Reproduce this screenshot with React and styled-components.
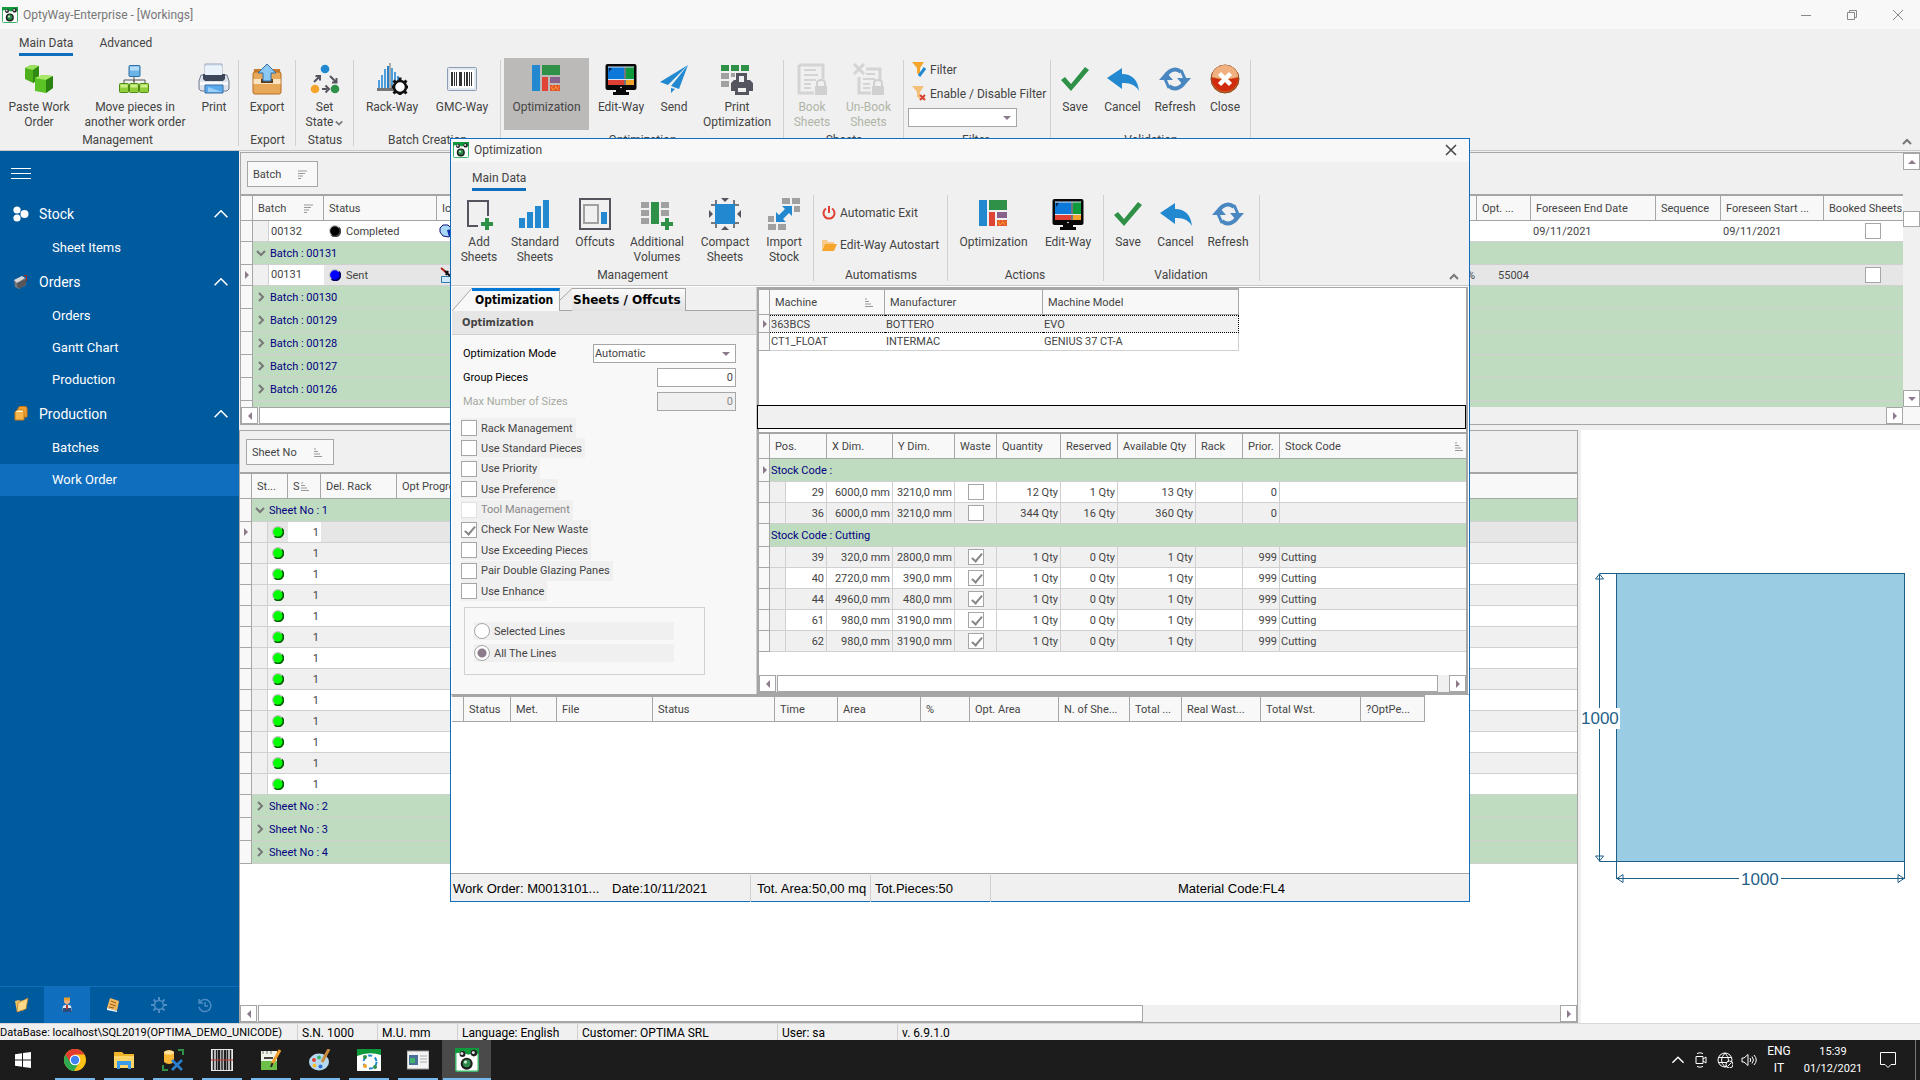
// src/App.jsx

import React, {useState} from "react"
import styled, {createGlobalStyle, css} from "styled-components"

const GlobalStyle = createGlobalStyle`
    * {
        box-sizing: border-box;
    }

    body {
        margin: 0;
        font-family: Roboto, "Liberation Sans", sans-serif;
        font-size: 12px;
        color: #444444;
        background: #f0f0f0;
    }

    button, input, select {
        font: inherit;
        color: inherit;
        margin: 0;
        border-radius: 0;
    }

    svg {
        display: block;
        flex-shrink: 0;
    }
`

const LINE = "#a6a6a6"
const SOFT = "#d0d0d0"

/* ---------- Icons ---------- */

const Svg = ({size = 32, box = "0 0 32 32", children, ...rest}) => (
  <svg width={size} height={size} viewBox={box} fill="none" aria-hidden="true" {...rest}>
    {children}
  </svg>
)

const LogoIcon = ({size = 16}) => (
  <Svg size={size} box="0 0 16 16">
    <rect x="0.5" y="0.5" width="15" height="15" rx="1" fill="#ffffff" stroke="#3fb56b" />
    <path d="M0 0h16v4l-3-1-4 1.500-4-1.500-5 0.500z" fill="#0f9a3c" />
    <circle cx="5" cy="4" r="2" fill="#222222" />
    <circle cx="4.6" cy="3.6" r="1" fill="#dddddd" />
    <circle cx="12.6" cy="3.4" r="2.2" fill="#222222" />
    <circle cx="12.2" cy="3" r="1" fill="#dddddd" />
    <circle cx="7.8" cy="10.5" r="4" fill="#1d1d1d" />
    <circle cx="7.8" cy="10.2" r="2.6" fill="#2d8a4a" />
    <circle cx="7" cy="9.4" r="1" fill="#d8f0d8" />
  </Svg>
)

const CubesIcon = () => (
  <Svg>
    <path d="M2 5l6-3 8 1v13l-6 4-8-4z" fill="#4fae1c" />
    <path d="M2 5l6-3 8 1-6 4z" fill="#9be25a" />
    <path d="M10 7l6-4v13l-6 4z" fill="#2f8a12" />
    <path d="M12 15l7-3 11 1v12l-7 5-11-2z" fill="#5cc326" />
    <path d="M12 15l7-3 11 1-7 4z" fill="#a8ea68" />
    <path d="M23 17l7-4v12l-7 5z" fill="#2a8212" />
  </Svg>
)

const TreeIcon = () => (
  <Svg>
    <path d="M15 13v6M5 21v-4h21v4M15 17v4" stroke="#555555" />
    <rect x="10" y="2.500" width="11" height="11" rx="1" fill="#6bb4e8" stroke="#2d6da3" />
    <rect x="11" y="3.500" width="9" height="4" fill="#b4dcf7" />
    {[0.5, 10.5, 20.5].map((x) => (
      <g key={x}>
        <rect x={x} y="20.5" width="9" height="9" rx="1" fill="#8fce3a" stroke="#4f8a14" />
        <rect x={x + 1} y="21.5" width="7" height="3" fill="#cdf08c" />
      </g>
    ))}
  </Svg>
)

const PrinterIcon = () => (
  <Svg>
    <path d="M7 1h17v12H7z" fill="#dce8f7" stroke="#9aa9bd" />
    <path d="M3 12h3v4h20v-4h3l2 6v8l-2 2H3l-2-2v-8z" fill="#dde2ea" stroke="#6f7d93" />
    <path d="M5 11h22v5l-2 2H7l-2-2z" fill="#3d4658" />
    <path d="M7 3h17v9H7z" fill="#eaf2fc" />
    <path d="M2 19h28v3H2z" fill="#f7f9fc" />
    <path d="M7 22h18v8H7z" fill="#5aa9ec" stroke="#3a6ea5" />
    <path d="M10 24l14 5h-14z" fill="#9bd0fa" />
  </Svg>
)

const ExportIcon = () => (
  <Svg>
    <path d="M3 6h26l1 10H2z" fill="#c97b2e" />
    <rect x="2" y="9" width="28" height="22" rx="2" fill="#e8a85a" stroke="#b56d22" />
    <path d="M2.500 16h27v5h-27z" fill="#f9e3c0" />
    <path d="M10 16h12v4H10z" fill="#5d3917" />
    <path d="M16 1l9 9h-5v8h-8v-8H7z" fill="#8cc8f2" stroke="#2f6ea8" />
  </Svg>
)

const StateIcon = () => (
  <Svg>
    <circle cx="16" cy="6" r="4.300" fill="#2289d0" />
    <circle cx="6" cy="26" r="4.300" fill="#f5a52c" />
    <circle cx="26" cy="26" r="4.300" fill="#2f9048" />
    <path d="M5 19l5-5M6.500 13H11v4.500M21 13l6 6M27.500 15v4.500H23M13 26h5M16.500 22.500L20 26l-3.500 3.500" stroke="#555560" strokeWidth="2" />
  </Svg>
)

const RackIcon = () => (
  <Svg>
    <path d="M1 25h17v3H1z" fill="#777777" />
    <path d="M2 17h2v8H2zM5 12h2v13H5zM8 6h2v19H8z" fill="#4d9fdc" />
    <path d="M11 3h2v22h-2z" fill="#2b7fc7" />
    <path d="M13.500 0h1v27h-1z" fill="#666666" />
    <path d="M15 5h2v18h-2zM18 9h2v9h-2zM21 13h2v6h-2z" fill="#4d9fdc" />
    <circle cx="24" cy="24" r="6" fill="#ffffff" stroke="#111111" strokeWidth="2.500" />
    <path d="M24 14.500v3M24 30.500v2M15.500 24h2.500M30 24h2.500M17.500 17.500l2 2M28.500 28.500l2 2M30.500 17.500l-2 2M17.500 30.500l2-2" stroke="#111111" strokeWidth="3" />
  </Svg>
)

const BarcodeIcon = () => (
  <Svg>
    <rect x="1.500" y="4.500" width="29" height="23" rx="1" fill="#f4f7fb" stroke="#8d9db3" />
    <rect x="3" y="6" width="26" height="20" fill="#ffffff" stroke="#cfd8e4" />
    {[5, 8, 10, 13, 15, 18, 20, 23, 25].map((x, i) => (
      <rect key={x} x={x} y="9" width={i % 3 ? 1 : 2} height="14" fill="#333333" />
    ))}
  </Svg>
)

const LayoutIcon = () => (
  <Svg>
    <path d="M1 2h8v26H1z" fill="#2289d0" />
    <path d="M11 2h18v10H11z" fill="#2f9048" />
    <path d="M11 14h6v14h-6z" fill="#e04434" />
    <path d="M19 14h10v6H19z" fill="#88628c" />
    <path d="M19 22h10v6H19z" fill="#e4572e" />
    <path d="M20 24l2 3 3-3 2 3M21 23h1M24 23h1M27 24h1" stroke="#f5a52c" />
  </Svg>
)

const MonitorIcon = () => (
  <Svg>
    <rect x="0.500" y="1" width="31" height="26" rx="2" fill="#080808" />
    <path d="M3 4h16v12H3z" fill="#0c79da" />
    <path d="M21 4h8v12h-8z" fill="#0f9a3c" />
    <path d="M3 17h16v5H3z" fill="#de4034" />
    <path d="M21 17h8v5h-8z" fill="#f3a32c" />
    <path d="M4 5h3l-3 4z" fill="#06224c" />
    <path d="M3 4h26M20 4v18M3 16.500h26" stroke="#d6e6f5" />
    <path d="M11 27h10v2h3v3H8v-3h3z" fill="#080808" />
    <circle cx="16" cy="24.500" r="0.800" fill="#ffffff" />
  </Svg>
)

const SendIcon = () => (
  <Svg>
    <path d="M30 2L2 19l8 3z" fill="#2289d0" />
    <path d="M30 2L13 23l8 3z" fill="#2289d0" />
    <path d="M13 25v5l4-4z" fill="#2289d0" />
  </Svg>
)

const PrintLayoutIcon = () => (
  <Svg>
    <path d="M0 2h8v6H0zM10 2h8v6h-8zM20 2h8v6h-8z" fill="#2f9048" />
    <path d="M0 10h8v6H0zM10 10h4v4h-4zM0 18h8v6H0z" fill="#a0a0a0" />
    <path d="M15 10h11v7h3l3 3v8h-4v4H14v-4h-4v-8l3-3h2z" fill="#555560" />
    <path d="M18 13h5v6h-5zM17 25h8v4h-8z" fill="#f0f0f0" />
  </Svg>
)

const BookIcon = ({removed}) => (
  <Svg>
    <path d={removed ? "M13 6h14v12M6 14v16h12" : "M3 2h24v14M3 2v28h15"} stroke="#d4d4d4" strokeWidth="3" />
    {removed && <path d="M1 1l10 10M11 1L1 11" stroke="#d4d4d4" strokeWidth="3" />}
    <path d={removed ? "M13 11h9M10 16h12M10 21h7M10 25h7" : "M8 7h12M8 12h14M8 17h12M8 21h7M8 25h7"} stroke="#d4d4d4" strokeWidth="2" />
    <path d="M19 23h12v9H19z" fill="#d0d0d0" />
    <path d="M21 23v-3q0-3 4-3t4 3v3" stroke="#d0d0d0" strokeWidth="2" />
  </Svg>
)

const CheckIcon = () => (
  <Svg>
    <path d="M2 17l4-3 6 7L26 4l4 3-18 21z" fill="#2f9048" />
  </Svg>
)

const UndoIcon = () => (
  <Svg>
    <path d="M0 15L15 5v6q15 0 17 17-5-9-17-8v6z" fill="#2289d0" />
  </Svg>
)

const RefreshIcon = () => (
  <Svg>
    <path d="M7 17a9 9 0 0 1 15-8M25 15a9 9 0 0 1-15 8" stroke="#4a87c0" strokeWidth="4" />
    <path d="M0 17l7-8 7 8zM18 15l7 8 7-8z" fill="#4a87c0" />
    <path d="M22 7l4 9M10 25l-4-9" stroke="#4a87c0" strokeWidth="3" />
  </Svg>
)

const CloseRoundIcon = () => (
  <Svg>
    <circle cx="16" cy="16" r="14" fill="#c9541c" stroke="#8a4a20" />
    <path d="M3 14a13 12 0 0 1 26 0q-13 4-26 0z" fill="#f0b080" />
    <path d="M3 15q13 3 26 0a13 13 0 0 1-26 0z" fill="#cf2b0c" />
    <path d="M10.500 10.500l11 11M21.500 10.500l-11 11" stroke="#ffffff" strokeWidth="4.500" />
  </Svg>
)

const FunnelIcon = ({off}) => (
  <Svg size={16} box="0 0 16 16">
    <path d="M1 0h12L9 6v7l-3-2V6z" fill={off ? "#f4c078" : "#f5a52c"} />
    {off
      ? <path d="M9 9l5 5M14 9l-5 5" stroke="#d8402f" strokeWidth="2" />
      : <path d="M14 6l-6 8" stroke="#2289d0" strokeWidth="3" />}
  </Svg>
)

const AddSheetIcon = () => (
  <Svg>
    <path d="M15 28H5V3h20v15" stroke="#555560" strokeWidth="2" />
    <path d="M24 20v12M18 26h12" stroke="#2f9048" strokeWidth="4" />
  </Svg>
)

const BarsIcon = () => (
  <Svg>
    <path d="M0 20h6v10H0zM8 14h6v16H8zM16 8h6v22h-6zM24 2h6v28h-6z" fill="#2289d0" />
  </Svg>
)

const OffcutsIcon = () => (
  <Svg>
    <path d="M1 1h30v30H1z" stroke="#555560" strokeWidth="2" />
    <path d="M5 7h14v18H5z" stroke="#a0a0a0" strokeWidth="2" />
    <path d="M22 14h6v12h-6z" fill="#2289d0" />
  </Svg>
)

const VolumesIcon = () => (
  <Svg>
    <path d="M0 4h8v6H0zM0 12h8v6H0zM0 20h8v6H0zM20 4h8v6h-8zM20 12h8v6h-8z" fill="#a0a0a0" />
    <path d="M10 4h8v22h-8z" fill="#2f9048" />
    <path d="M26 20v12M20 26h12" stroke="#2f9048" strokeWidth="4" />
  </Svg>
)

const CompactIcon = () => (
  <Svg>
    <path d="M7 2v28M25 2v28M2 7h28M2 25h28" stroke="#777780" strokeWidth="2" />
    <path d="M6 6h20v20H6z" fill="#2289d0" />
    <path d="M12 0h8l-4 4zM12 32h8l-4-4zM0 12v8l4-4zM32 12v8l-4-4z" fill="#555560" />
  </Svg>
)

const ImportIcon = () => (
  <Svg>
    <path d="M14 0h8v6h-8zM24 0h8v6h-8zM26 8h6v6h-6zM0 18h6v6H0zM0 26h8v6H0zM10 26h8v6h-8z" fill="#a0a0a0" />
    <path d="M24 8v10l-3-3-6 6 3 3H8V14l3 3 6-6-3-3z" fill="#2289d0" />
  </Svg>
)

const PowerIcon = () => (
  <Svg size={16} box="0 0 16 16">
    <path d="M5 3.500a5.500 5.500 0 1 0 6 0" stroke="#de4034" strokeWidth="2" />
    <path d="M8 1v7" stroke="#de4034" strokeWidth="2" />
  </Svg>
)

const FolderIcon = () => (
  <Svg size={16} box="0 0 16 16">
    <path d="M1 3h5l1 2h6v3H4l-3 5z" fill="#f7c98a" />
    <path d="M4 7h12l-3 7H1z" fill="#f5a52c" />
  </Svg>
)

const Chevron = ({dir = "down", size = 10, color = "#777777", width = 2}) => {
  const d = {
    down: "M1 3l4 4 4-4",
    up: "M1 7l4-4 4 4",
    right: "M3 1l4 4-4 4",
  }[dir]
  return (
    <Svg size={size} box="0 0 10 10"><path d={d} stroke={color} strokeWidth={width} /></Svg>
  )
}

const Triangle = ({dir = "right"}) => {
  const d = {
    right: "M2 0l4 4-4 4z",
    left: "M6 0v8L2 4z",
    up: "M0 6l4-4 4 4z",
    down: "M0 2h8L4 6z",
  }[dir]
  return <Svg size={8} box="0 0 8 8"><path d={d} fill="#8b7b8b" /></Svg>
}

const SortIcon = ({desc}) => (
  <Svg size={9} box="0 0 9 9">
    <path
      d={desc ? "M0 1h9M0 3.500h7M0 6h5M0 8.500h3" : "M0 1h2M0 3.500h4M0 6h6M0 8.500h8"}
      stroke="#999999"
    />
  </Svg>
)

const Dot = ({color, rim}) => (
  <Svg size={12} box="0 0 12 12">
    <circle cx="6" cy="6" r="6" fill="#c0c0c0" />
    <path d="M10.500 2a6 6 0 0 1-8.500 8.500z" fill={rim} />
    <circle cx="5.800" cy="6" r="4.700" fill={color} />
  </Svg>
)

/* ---------- Title bar ---------- */

const TitleBar = styled.header`
    display: flex;
    align-items: center;
    gap: 5px;
    height: ${({$dialog}) => ($dialog ? "23px" : "29px")};
    padding: 0 ${({$dialog}) => ($dialog ? "9px 2px 2px" : "14px 0 2px")};
    background: #f8f8f8;
    color: ${({$dialog}) => ($dialog ? "#444444" : "#777777")};
    flex-shrink: 0;
`

const Title = styled.h1`
    flex: 1;
    margin: 0;
    font-size: 12px;
    font-weight: 400;
`

const WindowButton = styled.button`
    display: flex;
    justify-content: center;
    width: ${({$narrow}) => ($narrow ? "18px" : "46px")};
    padding: 0;
    border: 0;
    background: none;
`

const WindowButtons = styled.div`
    display: flex;
    margin-right: -15px;
`

/* ---------- Ribbon ---------- */

const Ribbon = styled.section`
    position: relative;
    display: flex;
    flex-direction: column;
    height: 122px;
    background: #f0f0f0;
    border-bottom: 1px solid #c8c8c8;
    margin-top: ${({$dialog}) => ($dialog ? "2px" : "0")};
    flex-shrink: 0;
`

const RibbonTabs = styled.nav`
    display: flex;
    gap: 26px;
    height: 29px;
    padding: 3px 0 0 ${({$dialog}) => ($dialog ? "21px" : "19px")};
`

const RibbonTab = styled.button`
    height: 24px;
    padding: 0;
    border: 0;
    border-bottom: 3px solid ${({$active}) => ($active ? "#106ebe" : "transparent")};
    background: none;
    line-height: 20px;
`

const RibbonGroups = styled.div`
    display: flex;
    flex: 1;
`

const Group = styled.div`
    display: flex;
    flex-direction: column;
    width: ${({$w}) => $w}px;
    height: 90px;
    background: linear-gradient(#d0d0d0, #d0d0d0) right 0 top 2px / 1px 86px no-repeat;
`

const GroupBody = styled.div`
    display: flex;
    height: 74px;
    padding-left: ${({$pad}) => $pad || 0}px;
`

const GroupName = styled.div`
    line-height: 16px;
    text-align: center;
    padding-right: ${({$pad}) => $pad || 0}px;
`

const BigButton = styled.button`
    display: flex;
    flex-direction: column;
    align-items: center;
    width: ${({$w}) => $w}px;
    height: 72px;
    padding: 5px 0 0;
    border: 0;
    background: ${({$active}) => ($active ? "#bbbab8" : "none")};
    white-space: pre;
    line-height: 15px;

    &:disabled {
        color: #b0b5a8;
    }
`

const ButtonLabel = styled.span`
    margin-top: 5px;
    text-align: center;
`

// Second line of a split button, with its own drop-down mark
const DropLine = styled.span`
    display: flex;
    align-items: center;
    gap: 2px;
`

const SmallStack = styled.div`
    display: flex;
    flex-direction: column;
    align-items: flex-start;
    padding: ${({$wide}) => ($wide ? "10px 0 0 4px" : "2px 0 0 1px")};
    gap: ${({$wide}) => ($wide ? "12px" : "4px")};
`

const SmallButton = styled.button`
    display: flex;
    align-items: center;
    gap: 3px;
    height: 20px;
    padding: 0 0 0 3px;
    border: 0;
    background: none;
    white-space: nowrap;
`

const Combo = styled.div`
    position: relative;
    display: flex;
    width: ${({$w}) => $w}px;
    height: 19px;

    select {
        width: 100%;
        padding: 0 1px;
        border: 1px solid ${LINE};
        background: #ffffff;
        appearance: none;
        font-size: 11px;
    }

    svg {
        position: absolute;
        right: 6px;
        top: 6px;
        pointer-events: none;
    }
`

const Collapse = styled.button`
    position: absolute;
    right: ${({$dialog}) => ($dialog ? "10px" : "8px")};
    bottom: 3px;
    padding: 0;
    border: 0;
    background: none;
`

/* ---------- Workspace ---------- */

const Screen = styled.div`
    position: relative;
    display: flex;
    flex-direction: column;
    min-height: 100vh;
`

const Workspace = styled.main`
    display: flex;
    flex: 1;
`

const Sidebar = styled.aside`
    display: flex;
    flex-direction: column;
    width: 239px;
    flex-shrink: 0;
    background: #005a9e;
    color: #ffffff;
`

const MenuButton = styled.button`
    display: flex;
    align-items: center;
    height: 45px;
    padding: 0 11px;
    border: 0;
    background: none;
`

const SideHead = styled.button`
    display: flex;
    align-items: center;
    width: 100%;
    height: 36px;
    gap: 10px;
    padding: 0 10px 0 13px;
    border: 0;
    background: none;
    font-size: 14px;
    text-align: left;

    span {
        flex: 1;
    }
`

const SideItem = styled.a`
    display: block;
    height: 32px;
    padding-left: 52px;
    line-height: 32px;
    font-size: 13px;
    color: #ffffff;
    text-decoration: none;
    background: ${({$active}) => ($active ? "#106ebe" : "transparent")};
`

const SideTools = styled.div`
    display: grid;
    grid-template-columns: 44px repeat(4, 46px);
    height: 37px;
    margin-top: auto;
    border-top: 1px solid #106ebe;
`

const SideTool = styled.button`
    display: grid;
    place-items: center;
    padding: 0;
    border: 0;
    background: ${({$active}) => ($active ? "#106ebe" : "none")};
`

const Content = styled.div`
    display: flex;
    flex-direction: column;
    flex: 1;
    min-width: 0;
    padding-top: 1px;
`

const BatchPanel = styled.section`
    display: grid;
    grid-template-columns: minmax(0, 1fr) 17px;
    height: 273px;
    margin: 0 0 5px 1px;
    border: 1px solid ${LINE};
    border-right: 0;
    flex-shrink: 0;
`

const LowerArea = styled.div`
    display: flex;
    flex: 1;
    gap: 3px;
`

const SheetPanel = styled.section`
    display: flex;
    flex-direction: column;
    flex: 1;
    min-width: 0;
    background: #ffffff;
    border: 1px solid ${LINE};
`

const Preview = styled.section`
    display: flex;
    align-items: center;
    width: 339px;
    background: #ffffff;
`

const GridPane = styled.div`
    display: flex;
    flex-direction: column;
    min-width: 0;
    height: ${({$h}) => ($h ? $h + "px" : "auto")};
    overflow: hidden;
`

const GroupArea = styled.div`
    height: 41px;
    padding: 8px 6px;
    background: #f0f0f0;
    flex-shrink: 0;
`

const GroupChip = styled.button`
    display: flex;
    align-items: center;
    justify-content: space-between;
    width: ${({$w}) => $w}px;
    height: 26px;
    padding: 0 10px 0 5px;
    border: 1px solid ${LINE};
    background: #f8f8f8;
    font-size: 11px;
`

/* ---------- Data grid ---------- */

const Table = styled.table`
    width: ${({$w}) => ($w ? $w + "px" : "100%")};
    table-layout: fixed;
    border-collapse: separate;
    border-spacing: 0;
    border-top: 2px solid ${LINE};
    font-size: 11px;
    flex-shrink: 0;
`

const Th = styled.th`
    height: 25px;
    padding: 0 0 0 5px;
    border-right: 1px solid ${LINE};
    border-bottom: 1px solid ${LINE};
    background: #f8f8f8;
    font-weight: 400;
    text-align: left;
    white-space: nowrap;
    overflow: hidden;

    &:last-child {
        border-right: ${({$closed}) => ($closed ? `1px solid ${LINE}` : "0")};
    }
`

const ThInner = styled.div`
    display: flex;
    align-items: center;
    justify-content: space-between;
    padding-right: ${({$tight}) => ($tight ? "2px" : "10px")};
    overflow: hidden;
`

const rowColors = {
  plain: "#ffffff",
  alt: "#f0f0f0",
  focus: "#e6e6e6",
}

const Tr = styled.tr`
    height: ${({$h}) => $h || 21}px;
    background: ${({$kind}) => rowColors[$kind || "plain"]};
`

const Td = styled.td`
    padding: 0 ${({$right}) => ($right ? "2px" : "0")} 0 ${({$pad}) => $pad ?? 1}px;
    border-bottom: 1px solid ${SOFT};
    text-align: ${({$right, $center}) => ($right ? "right" : $center ? "center" : "left")};
    white-space: nowrap;
    overflow: hidden;
    ${({$lined}) => $lined && css`border-right: 1px solid ${SOFT};`}
    ${({$white}) => $white && css`background: #ffffff;`}
    ${({$indent}) => $indent && css`
        background: linear-gradient(90deg, #f0f0f0 ${$indent - 1}px, ${SOFT} ${$indent - 1}px, ${SOFT} ${$indent}px, transparent ${$indent}px);
    `}
`

const Indicator = styled.td`
    padding: 0 0 0 2px;
    border-right: 1px solid ${LINE};
    border-bottom: 1px solid ${LINE};
    background: #f8f8f8;
`

const GroupCell = styled.td`
    padding: 0 0 0 ${({$flat}) => ($flat ? "1px" : "3px")};
    border-bottom: 1px solid ${SOFT};
    background: #c0dcc0;
    color: #000080;
`

const Inline = styled.span`
    display: flex;
    align-items: center;
    gap: ${({$gap}) => $gap || 5}px;
    overflow: hidden;
`

// White editor look of the focused cell, right of the indent
const FocusedNumber = styled.div`
    height: 20px;
    margin-left: 16px;
    padding-left: 2px;
    line-height: 20px;
    background: #ffffff;
`

const Check = styled.input`
    position: relative;
    display: inline-block;
    width: 16px;
    height: 16px;
    border: 1px solid ${LINE};
    background: #ffffff;
    appearance: none;
    vertical-align: middle;
    flex-shrink: 0;

    &:disabled {
        border-color: #e0e0e0;
    }

    &:checked::after {
        content: "";
        position: absolute;
        left: 5px;
        top: 1px;
        width: 4px;
        height: 9px;
        border: solid #888888;
        border-width: 0 2px 2px 0;
        transform: rotate(40deg);
    }
`

/* ---------- Scroll bars ---------- */

const ScrollTrack = styled.div`
    display: flex;
    flex-direction: ${({$vertical}) => ($vertical ? "column" : "row")};
    justify-content: space-between;
    height: ${({$vertical}) => ($vertical ? "auto" : "17px")};
    background: #f0f0f0;
    flex-shrink: 0;
`

const ScrollArrow = styled.button`
    display: grid;
    place-items: center;
    width: 17px;
    height: 17px;
    padding: 0;
    border: 1px solid ${LINE};
    background: #ffffff;
    flex-shrink: 0;
`

const ScrollRail = styled.div`
    flex: 1;
    padding: ${({$vertical}) => ($vertical ? "41px 0 0" : "0 0 0 1px")};
`

const ScrollThumb = styled.div`
    width: ${({$size}) => $size};
    height: ${({$vertical}) => ($vertical ? "16px" : "100%")};
    border: 1px solid ${LINE};
    background: #ffffff;
`

const Corner = styled.div`
    background: #f8f8f8;
`

const HScroll = ({size}) => (
  <ScrollTrack>
    <ScrollArrow aria-label="Scroll left"><Triangle dir="left" /></ScrollArrow>
    <ScrollRail><ScrollThumb $size={size} /></ScrollRail>
    <ScrollArrow aria-label="Scroll right"><Triangle dir="right" /></ScrollArrow>
  </ScrollTrack>
)

/* ---------- Dialog ---------- */

const Dialog = styled.div`
    position: absolute;
    left: 450px;
    top: 138px;
    display: flex;
    flex-direction: column;
    width: 1020px;
    height: 764px;
    border: 1px solid #106ebe;
    background: #f0f0f0;
`

const DialogBody = styled.div`
    display: grid;
    grid-template-columns: 305px minmax(0, 1fr);
    height: 408px;
    padding: 1px 1px 0;
    background: #ffffff;
`

const OptionsPane = styled.div`
    display: flex;
    flex-direction: column;
    border-right: 1px solid ${SOFT};
    background: #f8f8f8;
`

const PageTabs = styled.div`
    display: flex;
    height: 24px;
    padding-top: 1px;
    border-bottom: 1px solid ${LINE};
    background: #f0f0f0;
`

const PageTab = styled.button`
    width: ${({$active}) => ($active ? "88px" : "114px")};
    height: 23px;
    padding: 0 0 ${({$active}) => ($active ? "2px 3px" : "0 1px")};
    border: 0;
    border-right: 1px solid ${LINE};
    border-top: ${({$active}) => ($active ? "3px solid #0078d7" : `1px solid ${LINE}`)};
    background: ${({$active}) => ($active ? "#f8f8f8" : "linear-gradient(#fbfbfb, #e0e0e0)")};
    font-family: ${({$active}) => ($active ? '"DejaVu Sans Condensed", "DejaVu Sans"' : '"DejaVu Sans"')}, sans-serif;
    font-size: 12px;
    font-weight: 700;
    text-align: left;
    color: #000000;
    white-space: nowrap;
`

const PaneTitle = styled.h2`
    height: 24px;
    margin: 0;
    padding-left: 10px;
    border-bottom: 1px solid ${SOFT};
    background: #e6e6e6;
    font-family: "DejaVu Sans Condensed", "DejaVu Sans", sans-serif;
    font-size: 11px;
    line-height: 24px;
    flex-shrink: 0;
`

const Form = styled.form`
    padding: 6px 20px 0 9px;
`

const FormRow = styled.div`
    display: flex;
    align-items: center;
    justify-content: space-between;
    height: 24px;
    padding-left: 2px;
    font-size: 11px;
    color: ${({$disabled}) => ($disabled ? "#a5aaa0" : "#000000")};

    select {
        color: #444444;
    }
`

const NumberBox = styled.input`
    width: 79px;
    height: 19px;
    padding: 0 2px;
    border: 1px solid ${LINE};
    background: #ffffff;
    color: #444444;
    text-align: right;
    font-size: 11px;

    &:disabled {
        background: #f0f0f0;
        color: #888888;
    }
`

const CheckList = styled.div`
    display: flex;
    flex-direction: column;
    align-items: flex-start;
    justify-content: space-between;
    height: 183px;
    margin-top: 5px;
`

const OptionLabel = styled.label`
    display: flex;
    align-items: center;
    gap: 4px;
    width: ${({$wide}) => ($wide ? "200px" : "auto")};
    height: ${({$wide}) => ($wide ? "18px" : "20px")};
    padding-right: 3px;
    background: #f0f0f0;
    font-size: 11px;
    color: ${({$disabled}) => ($disabled ? "#888888" : "#444444")};
`

const RadioBox = styled.fieldset`
    display: flex;
    flex-direction: column;
    gap: 4px;
    width: 241px;
    height: 68px;
    margin: 6px 0 0 3px;
    padding: 14px 0 0 9px;
    border: 1px solid ${SOFT};
`

const Radio = styled.input`
    width: 16px;
    height: 16px;
    border: 1px solid ${LINE};
    border-radius: 50%;
    background: #ffffff;
    appearance: none;
    flex-shrink: 0;

    &:checked {
        background: radial-gradient(circle, #8b7b8b 4px, #ffffff 5px);
    }
`

const GridsPane = styled.div`
    display: flex;
    flex-direction: column;
    border: solid ${LINE};
    border-width: 0 2px 2px;
`

const MachineArea = styled.div`
    height: 118px;
    border-top: 1px solid ${LINE};
    background: #ffffff;
`

const ProgressBox = styled.div`
    height: 24px;
    margin: 0 0 3px -2px;
    border: 1px solid #000000;
    background: #f0f0f0;
`

const FocusRow = styled(Tr)`
    td + td {
        border-top: 1px dotted #000000;
        border-bottom: 1px dotted #000000;
    }

    td:last-child {
        border-right: 1px dotted #000000;
    }
`

const StockArea = styled.div`
    flex: 1;
    background: #ffffff;
`

const ResultArea = styled.div`
    flex: 1;
    border-top: 1px solid ${LINE};
    padding: 0 1px;
    background: #ffffff;
`

const DialogStatus = styled.footer`
    display: grid;
    grid-template-columns: 159px 141px 120px 120px 1fr;
    height: 28px;
    padding-top: 1px;
    border-top: 1px solid ${LINE};
    background: #f0f0f0;
    font-family: "Liberation Sans", sans-serif;
    font-size: 13px;
    line-height: 27px;
    color: #000000;
`

const DialogStatusCell = styled.span`
    padding-left: ${({$pad}) => $pad}px;
    white-space: nowrap;
    border-right: ${({$line}) => ($line ? `1px solid ${SOFT}` : "0")};
`

/* ---------- Status bar and taskbar ---------- */

const StatusBar = styled.footer`
    display: flex;
    height: 17px;
    border-top: 1px solid #d8d8d8;
    background: #f0f0f0;
    color: #000000;
    flex-shrink: 0;
`

const StatusCell = styled.span`
    width: ${({$w}) => $w}px;
    padding-top: 1px;
    padding-left: ${({$first}) => ($first ? "0" : "4px")};
    border-right: ${({$last}) => ($last ? "0" : `1px solid ${SOFT}`)};
    font-size: ${({$first}) => ($first ? "11px" : "12px")};
    white-space: nowrap;
    line-height: 16px;
`

const Taskbar = styled.footer`
    display: flex;
    height: 40px;
    background: #1c1c1c;
    color: #ffffff;
    flex-shrink: 0;
`

const TaskButton = styled.button`
    display: grid;
    place-items: center;
    width: ${({$start}) => ($start ? "46px" : "49px")};
    height: 40px;
    margin-right: ${({$start}) => ($start ? "4px" : "0")};
    padding: 0;
    border: 0;
    background:
        linear-gradient(#76b9ed, #76b9ed) center bottom / ${({$start, $active}) => ($start ? "0" : $active ? "48px" : "40px")} 2px no-repeat,
        ${({$active}) => ($active ? "#4a4a4a" : "transparent")};
`

const Tray = styled.div`
    display: flex;
    align-items: center;
    gap: 8px;
    margin-left: auto;
    padding-right: 4px;
    font-size: 11px;
    line-height: 17px;
    text-align: center;
`

const TrayText = styled.div`
    width: ${({$w}) => $w}px;
    font-size: ${({$big}) => ($big ? "12px" : "11px")};
`

const TrayEnd = styled.div`
    width: 1px;
    height: 40px;
    margin-left: 4px;
    background: #777777;
`

/* ---------- Data ---------- */

const stockRows = [
  {group: "Stock Code :"},
  {pos: 29, x: "6000,0", y: "3210,0", qty: 12, res: 1, av: 13, prior: 0, code: ""},
  {pos: 36, x: "6000,0", y: "3210,0", qty: 344, res: 16, av: 360, prior: 0, code: "", alt: true},
  {group: "Stock Code : Cutting"},
  {pos: 39, x: "320,0", y: "2800,0", waste: true, qty: 1, res: 0, av: 1, prior: 999, code: "Cutting", alt: true},
  {pos: 40, x: "2720,0", y: "390,0", waste: true, qty: 1, res: 0, av: 1, prior: 999, code: "Cutting"},
  {pos: 44, x: "4960,0", y: "480,0", waste: true, qty: 1, res: 0, av: 1, prior: 999, code: "Cutting", alt: true},
  {pos: 61, x: "980,0", y: "3190,0", waste: true, qty: 1, res: 0, av: 1, prior: 999, code: "Cutting"},
  {pos: 62, x: "980,0", y: "3190,0", waste: true, qty: 1, res: 0, av: 1, prior: 999, code: "Cutting", alt: true},
]

const stockCols = [
  ["Pos.", 57], ["X Dim.", 66], ["Y Dim.", 62], ["Waste", 42], ["Quantity", 64],
  ["Reserved", 57], ["Available Qty", 78], ["Rack", 47], ["Prior.", 37],
]

const resultCols = [
  ["Status", 47], ["Met.", 46], ["File", 96], ["Status", 122], ["Time", 63],
  ["Area", 83], ["%", 49], ["Opt. Area", 89], ["N. of She...", 71], ["Total ...", 52],
  ["Real Wast...", 79], ["Total Wst.", 100], ["?OptPe...", 64],
]

const optionList = [
  ["Rack Management"],
  ["Use Standard Pieces"],
  ["Use Priority"],
  ["Use Preference"],
  ["Tool Management", "disabled"],
  ["Check For New Waste", "checked"],
  ["Use Exceeding Pieces"],
  ["Pair Double Glazing Panes"],
  ["Use Enhance"],
]

const Cols = ({widths}) => (
  <colgroup>
    {widths.map((w, i) => <col key={i} width={w || undefined} />)}
  </colgroup>
)

const GroupRow = ({label, span, open}) => (
  <Tr $h={23}>
    <Indicator />
    <GroupCell colSpan={span}>
      {label && (
        <Inline $gap={4}><Chevron dir={open ? "down" : "right"} /> {label}</Inline>
      )}
    </GroupCell>
  </Tr>
)

/* ---------- Main window parts ---------- */

const ToolButton = ({w, icon, label, drop, ...rest}) => (
  <BigButton $w={w} {...rest}>
    {icon}
    <ButtonLabel>{label}</ButtonLabel>
    {drop && <DropLine>{drop}<Chevron size={8} /></DropLine>}
  </BigButton>
)

const MainRibbon = () => (
  <Ribbon>
    <RibbonTabs>
      <RibbonTab $active>Main Data</RibbonTab>
      <RibbonTab>Advanced</RibbonTab>
    </RibbonTabs>
    <RibbonGroups>
      <Group $w={239}>
        <GroupBody>
          <ToolButton w={78} icon={<CubesIcon />} label={"Paste Work\nOrder"} />
          <ToolButton w={114} icon={<TreeIcon />} label={"Move pieces in\nanother work order"} />
          <ToolButton w={44} icon={<PrinterIcon />} label="Print" />
        </GroupBody>
        <GroupName $pad={4}>Management</GroupName>
      </Group>
      <Group $w={57}>
        <GroupBody>
          <ToolButton w={56} icon={<ExportIcon />} label="Export" />
        </GroupBody>
        <GroupName>Export</GroupName>
      </Group>
      <Group $w={58}>
        <GroupBody>
          <ToolButton w={57} icon={<StateIcon />} label="Set" drop="State" />
        </GroupBody>
        <GroupName>Status</GroupName>
      </Group>
      <Group $w={147}>
        <GroupBody>
          <ToolButton w={76} icon={<RackIcon />} label="Rack-Way" />
          <ToolButton w={64} icon={<BarcodeIcon />} label="GMC-Way" />
        </GroupBody>
        <GroupName>Batch Creation</GroupName>
      </Group>
      <Group $w={283}>
        <GroupBody $pad={3}>
          <ToolButton w={85} icon={<LayoutIcon />} label="Optimization" $active />
          <ToolButton w={64} icon={<MonitorIcon />} label="Edit-Way" />
          <ToolButton w={42} icon={<SendIcon />} label="Send" />
          <ToolButton w={84} icon={<PrintLayoutIcon />} label={"Print\nOptimization"} />
        </GroupBody>
        <GroupName>Optimization</GroupName>
      </Group>
      <Group $w={120}>
        <GroupBody>
          <ToolButton w={56} icon={<BookIcon />} label={"Book\nSheets"} disabled />
          <ToolButton w={57} icon={<BookIcon removed />} label={"Un-Book\nSheets"} disabled />
        </GroupBody>
        <GroupName>Sheets</GroupName>
      </Group>
      <Group $w={147}>
        <GroupBody $pad={3}>
          <SmallStack>
            <SmallButton><FunnelIcon />Filter</SmallButton>
            <SmallButton><FunnelIcon off />Enable / Disable Filter</SmallButton>
            <Combo $w={109}>
              <select aria-label="Filter"><option></option></select>
              <Triangle dir="down" />
            </Combo>
          </SmallStack>
        </GroupBody>
        <GroupName $pad={4}>Filter</GroupName>
      </Group>
      <Group $w={200}>
        <GroupBody>
          <ToolButton w={48} icon={<CheckIcon />} label="Save" />
          <ToolButton w={47} icon={<UndoIcon />} label="Cancel" />
          <ToolButton w={58} icon={<RefreshIcon />} label="Refresh" />
          <ToolButton w={42} icon={<CloseRoundIcon />} label="Close" />
        </GroupBody>
        <GroupName>Validation</GroupName>
      </Group>
    </RibbonGroups>
    <Collapse aria-label="Collapse ribbon"><Chevron dir="up" size={10} /></Collapse>
  </Ribbon>
)

const StockIcon = () => (
  <Svg size={16} box="0 0 16 16">
    <circle cx="4" cy="4" r="3.600" fill="#ffffff" />
    <circle cx="4" cy="12" r="3.600" fill="#ffffff" />
    <circle cx="11.500" cy="8" r="4" fill="#ffffff" />
  </Svg>
)

const OrdersIcon = () => (
  <Svg size={16} box="0 0 16 16">
    <path d="M1 6l8-4 4 3v6l-7 4-4-2z" fill="#77777c" />
    <path d="M1 6l8-4 3 2-8 5z" fill="#d6d6da" />
    <path d="M4 9l1 5 3 0 5-4V5z" fill="#55555b" />
    <path d="M11 1.500h2.500V7" stroke="#a8281c" />
  </Svg>
)

const BoxesIcon = () => (
  <Svg size={16} box="0 0 16 16">
    <path d="M5 2l2-1.500h6l1 1.500v9h-9z" fill="#f0a030" stroke="#c87812" />
    <path d="M2 6l2-2h6l1 2v8H2z" fill="#f8b64a" stroke="#c87812" />
    <path d="M2.500 6l2-1.500h5L10.500 6z" fill="#fff0c8" />
  </Svg>
)

const MainSidebar = () => (
  <Sidebar>
    <MenuButton aria-label="Menu">
      <Svg size={20} box="0 0 20 20"><path d="M0 4.500h20M0 9.500h20M0 14.500h20" stroke="#ffffff" /></Svg>
    </MenuButton>
    <nav>
      <SideHead><StockIcon /><span>Stock</span><Chevron dir="up" size={16} color="#ffffff" width={1} /></SideHead>
      <SideItem href="#sheet-items">Sheet Items</SideItem>
      <SideHead><OrdersIcon /><span>Orders</span><Chevron dir="up" size={16} color="#ffffff" width={1} /></SideHead>
      <SideItem href="#orders">Orders</SideItem>
      <SideItem href="#gantt">Gantt Chart</SideItem>
      <SideItem href="#production">Production</SideItem>
      <SideHead><BoxesIcon /><span>Production</span><Chevron dir="up" size={16} color="#ffffff" width={1} /></SideHead>
      <SideItem href="#batches">Batches</SideItem>
      <SideItem href="#work-order" $active>Work Order</SideItem>
    </nav>
    <SideTools>
      <SideTool aria-label="Archive">
        <Svg size={16} box="0 0 16 16">
          <path d="M1 4l4-1 1 1 4-1v10l-7 2z" fill="#f0c060" />
          <path d="M4 6l10-5-2 11-9 3z" fill="#ffd98a" stroke="#b87a20" strokeWidth="0.700" />
        </Svg>
      </SideTool>
      <SideTool $active aria-label="Workings">
        <Svg size={16} box="0 0 16 16">
          <circle cx="8" cy="4" r="3" fill="#f0b080" />
          <path d="M5 0.500h6v3H5z" fill="#e8a030" />
          <path d="M3 15l1-6q4-3 8 0l1 6z" fill="#dfe8f2" />
          <path d="M3 15l1-4h8l1 4z" fill="#2a4d80" />
          <path d="M7 8h2v4H7z" fill="#c0392b" />
        </Svg>
      </SideTool>
      <SideTool aria-label="Documents">
        <Svg size={16} box="0 0 16 16">
          <path d="M5 1l9 3-2 10-10-3z" fill="#f0b860" />
          <path d="M6 4l5 2M5 7l6 2M4 10l5 1" stroke="#9a5c14" />
          <path d="M2 11l10 3v1L2 13z" fill="#ffffff" />
        </Svg>
      </SideTool>
      <SideTool aria-label="Settings">
        <Svg size={16} box="0 0 16 16">
          <circle cx="8" cy="8" r="4.500" stroke="#4d8cc4" strokeWidth="1.500" />
          <path d="M8 0v3M8 13v3M0 8h3M13 8h3M2.500 2.500l2 2M11.500 11.500l2 2M13.500 2.500l-2 2M2.500 13.500l2-2" stroke="#4d8cc4" strokeWidth="2" />
        </Svg>
      </SideTool>
      <SideTool aria-label="History">
        <Svg size={16} box="0 0 16 16">
          <path d="M3 5a6 6 0 1 1-1 5M2 2v4h4M8 5v4h3" stroke="#4d8cc4" strokeWidth="1.500" />
        </Svg>
      </SideTool>
    </SideTools>
  </Sidebar>
)

const BatchGrid = () => (
  <BatchPanel>
    <GridPane $h={254}>
      <GroupArea>
        <GroupChip $w={71}>Batch <SortIcon desc /></GroupChip>
      </GroupArea>
      <Table>
        <Cols widths={[12, 71, 113, 100, 0, 54, 125, 65, 103, 79]} />
        <thead>
          <tr>
            <Th />
            <Th><ThInner>Batch <SortIcon desc /></ThInner></Th>
            <Th>Status</Th>
            <Th>Icon</Th>
            <Th />
            <Th>Opt. ...</Th>
            <Th>Foreseen End Date</Th>
            <Th>Sequence</Th>
            <Th>Foreseen Start ...</Th>
            <Th>Booked Sheets</Th>
          </tr>
        </thead>
        <tbody>
          <Tr>
            <Indicator />
            <Td $indent={16} $pad={18}>00132</Td>
            <Td $pad={5}><Inline><Dot color="#000000" rim="#444444" />Completed</Inline></Td>
            <Td $pad={2}>
              <Svg size={14} box="0 0 14 14">
                <path d="M4 1h5l4 4v5l-3 3-6-1-3-4V4z" fill="#a9d8f5" stroke="#101080" />
                <path d="M8 6l5-1v6l-3 2z" fill="#1030b0" />
              </Svg>
            </Td>
            <Td />
            <Td />
            <Td $pad={2}>09/11/2021</Td>
            <Td />
            <Td $pad={2}>09/11/2021</Td>
            <Td $center $pad={19}><Check type="checkbox" aria-label="Booked sheets 00132" /></Td>
          </Tr>
          <GroupRow label="Batch : 00131" span={9} open />
          <Tr $kind="focus">
            <Indicator><Triangle /></Indicator>
            <Td $indent={16} $pad={0}><FocusedNumber>00131</FocusedNumber></Td>
            <Td $pad={5}><Inline><Dot color="#0000ff" rim="#000060" />Sent</Inline></Td>
            <Td $pad={2}>
              <Svg size={17} box="0 0 17 17">
                <path d="M2.500 9.500h11v6h-11z" fill="#cfe9f8" stroke="#2a7ab0" />
                <path d="M2 1l6 5" stroke="#b02010" strokeWidth="2" />
                <path d="M6 4l5 5M7 8l2-4" stroke="#111111" strokeWidth="2" />
              </Svg>
            </Td>
            <Td $right>%</Td>
            <Td $right>55004</Td>
            <Td />
            <Td />
            <Td />
            <Td $center $pad={19}><Check type="checkbox" aria-label="Booked sheets 00131" /></Td>
          </Tr>
          {["00130", "00129", "00128", "00127", "00126"].map((n) => (
            <GroupRow key={n} label={`Batch : ${n}`} span={9} />
          ))}
          <GroupRow span={9} />
        </tbody>
      </Table>
    </GridPane>
    <ScrollTrack $vertical>
      <ScrollArrow aria-label="Scroll up"><Triangle dir="up" /></ScrollArrow>
      <ScrollRail $vertical><ScrollThumb $vertical $size="17px" /></ScrollRail>
      <ScrollArrow aria-label="Scroll down"><Triangle dir="down" /></ScrollArrow>
    </ScrollTrack>
    <HScroll size="60%" />
    <Corner />
  </BatchPanel>
)

const SheetFiller = styled.div`
    flex: 1;
`

const SheetGrid = () => (
  <SheetPanel>
    <GroupArea>
      <GroupChip $w={88}>Sheet No <SortIcon /></GroupChip>
    </GroupArea>
    <Table>
      <Cols widths={[12, 36, 33, 76, 0]} />
      <thead>
        <tr>
          <Th />
          <Th>St...</Th>
          <Th><ThInner>S<SortIcon /></ThInner></Th>
          <Th>Del. Rack</Th>
          <Th>Opt Progress</Th>
        </tr>
      </thead>
      <tbody>
        <GroupRow label="Sheet No : 1" span={4} open />
        {Array.from({length: 13}, (_, i) => (
          <Tr key={i} $kind={i === 0 ? "focus" : i % 2 ? "alt" : "plain"}>
            <Indicator>{i === 0 && <Triangle />}</Indicator>
            <Td $indent={16} $pad={20}><Dot color="#00ff00" rim="#006000" /></Td>
            <Td $right $white={i === 0}>1</Td>
            <Td />
            <Td />
          </Tr>
        ))}
        {[2, 3, 4].map((n) => (
          <GroupRow key={n} label={`Sheet No : ${n}`} span={4} />
        ))}
      </tbody>
    </Table>
    <SheetFiller />
    <HScroll size="68%" />
  </SheetPanel>
)

const SheetDrawing = () => (
  <svg width="325" height="331" viewBox="0 -5 325 331" fill="none">
    <g stroke="#1f5f87">
      <rect x="35.500" y="7.500" width="288" height="288" fill="#9acde3" />
      <path d="M35 7.500H18.500v288H36M35.500 296v17M323.500 296v17M36 312.500h287" />
      <path d="M18.500 8l-4 5h8zM18.500 295l-4-5h8zM36 312.500l6-4v8zM323 312.500l-6-4v8z" />
    </g>
    <path d="M0 142h39v21H0zM158 300h42v21h-42z" fill="#ffffff" />
    <g fill="#1f5f87" fontFamily="Liberation Sans, sans-serif" fontSize="17">
      <text x="0" y="158">1000</text>
      <text x="160" y="319">1000</text>
    </g>
  </svg>
)

/* ---------- Optimization dialog ---------- */

const DialogRibbon = () => (
  <Ribbon $dialog>
    <RibbonTabs $dialog>
      <RibbonTab $active>Main Data</RibbonTab>
    </RibbonTabs>
    <RibbonGroups>
      <Group $w={363}>
        <GroupBody $pad={2}>
          <ToolButton w={52} icon={<AddSheetIcon />} label={"Add\nSheets"} />
          <ToolButton w={60} icon={<BarsIcon />} label={"Standard\nSheets"} />
          <ToolButton w={60} icon={<OffcutsIcon />} label="Offcuts" />
          <ToolButton w={64} icon={<VolumesIcon />} label={"Additional\nVolumes"} />
          <ToolButton w={72} icon={<CompactIcon />} label={"Compact\nSheets"} />
          <ToolButton w={46} icon={<ImportIcon />} label={"Import\nStock"} />
        </GroupBody>
        <GroupName>Management</GroupName>
      </Group>
      <Group $w={134}>
        <GroupBody>
          <SmallStack $wide>
            <SmallButton><PowerIcon />Automatic Exit</SmallButton>
            <SmallButton><FolderIcon />Edit-Way Autostart</SmallButton>
          </SmallStack>
        </GroupBody>
        <GroupName>Automatisms</GroupName>
      </Group>
      <Group $w={156}>
        <GroupBody $pad={3}>
          <ToolButton w={85} icon={<LayoutIcon />} label="Optimization" />
          <ToolButton w={64} icon={<MonitorIcon />} label="Edit-Way" />
        </GroupBody>
        <GroupName $pad={2}>Actions</GroupName>
      </Group>
      <Group $w={156}>
        <GroupBody>
          <ToolButton w={48} icon={<CheckIcon />} label="Save" />
          <ToolButton w={47} icon={<UndoIcon />} label="Cancel" />
          <ToolButton w={58} icon={<RefreshIcon />} label="Refresh" />
        </GroupBody>
        <GroupName $pad={2}>Validation</GroupName>
      </Group>
    </RibbonGroups>
    <Collapse $dialog aria-label="Collapse ribbon"><Chevron dir="up" size={10} /></Collapse>
  </Ribbon>
)

const OptimizationOptions = () => {
  const [lines, setLines] = useState("all")
  return (
    <OptionsPane>
      <PageTabs>
        <Svg size={20} box="0 0 20 23" preserveAspectRatio="none" height="23">
          <path d="M0 23L20 0v23z" fill="#f8f8f8" />
          <path d="M0 23L20 0" stroke={LINE} />
        </Svg>
        <PageTab $active>Optimization</PageTab>
        <Svg size={12} box="0 0 12 23" preserveAspectRatio="none" height="23">
          <path d="M0 12L12 0v22H0z" fill="#eeeeee" />
          <path d="M0 12L12 0.500" stroke={LINE} />
        </Svg>
        <PageTab>Sheets / Offcuts</PageTab>
      </PageTabs>
      <PaneTitle>Optimization</PaneTitle>
      <Form>
        <FormRow>
          <label htmlFor="mode">Optimization Mode</label>
          <Combo $w={143}>
            <select id="mode"><option>Automatic</option></select>
            <Triangle dir="down" />
          </Combo>
        </FormRow>
        <FormRow>
          <label htmlFor="pieces">Group Pieces</label>
          <NumberBox id="pieces" defaultValue="0" />
        </FormRow>
        <FormRow $disabled>
          <label htmlFor="sizes">Max Number of Sizes</label>
          <NumberBox id="sizes" defaultValue="0" disabled />
        </FormRow>
        <CheckList>
          {optionList.map(([label, state]) => (
            <OptionLabel key={label} $disabled={state === "disabled"}>
              <Check
                type="checkbox"
                defaultChecked={state === "checked"}
                disabled={state === "disabled"}
              />
              {label}
            </OptionLabel>
          ))}
        </CheckList>
        <RadioBox>
          <OptionLabel $wide>
            <Radio type="radio" name="lines" checked={lines === "selected"} onChange={() => setLines("selected")} />
            Selected Lines
          </OptionLabel>
          <OptionLabel $wide>
            <Radio type="radio" name="lines" checked={lines === "all"} onChange={() => setLines("all")} />
            All The Lines
          </OptionLabel>
        </RadioBox>
      </Form>
    </OptionsPane>
  )
}

const MachineGrid = () => (
  <Table $w={480}>
    <Cols widths={[11, 115, 158, 196]} />
    <thead>
      <tr>
        <Th />
        <Th><ThInner>Machine <SortIcon /></ThInner></Th>
        <Th>Manufacturer</Th>
        <Th $closed>Machine Model</Th>
      </tr>
    </thead>
    <tbody>
      <FocusRow $kind="alt" $h={18}>
        <Indicator><Triangle /></Indicator>
        <Td>363BCS</Td>
        <Td>BOTTERO</Td>
        <Td>EVO</Td>
      </FocusRow>
      <Tr $h={18}>
        <Indicator />
        <Td>CT1_FLOAT</Td>
        <Td>INTERMAC</Td>
        <Td $lined>GENIUS 37 CT-A</Td>
      </Tr>
    </tbody>
  </Table>
)

const StockGrid = () => (
  <Table>
    <Cols widths={[11, ...stockCols.map((c) => c[1]), 0]} />
    <thead>
      <tr>
        <Th />
        {stockCols.map(([name]) => <Th key={name}>{name}</Th>)}
        <Th><ThInner $tight>Stock Code <SortIcon /></ThInner></Th>
      </tr>
    </thead>
    <tbody>
      {stockRows.map((row, i) => (row.group ? (
        <Tr key={row.group} $h={23}>
          <Indicator>{i === 0 && <Triangle />}</Indicator>
          <GroupCell $flat colSpan={10}>{row.group}</GroupCell>
        </Tr>
      ) : (
        <Tr key={row.pos} $kind={row.alt ? "alt" : "plain"}>
          <Indicator />
          <Td $lined $right $indent={16}>{row.pos}</Td>
          <Td $lined $right>{row.x} mm</Td>
          <Td $lined $right>{row.y} mm</Td>
          <Td $lined $center $pad={0}>
            <Check type="checkbox" defaultChecked={row.waste} aria-label={`Waste ${row.pos}`} />
          </Td>
          <Td $lined $right>{row.qty} Qty</Td>
          <Td $lined $right>{row.res} Qty</Td>
          <Td $lined $right>{row.av} Qty</Td>
          <Td $lined />
          <Td $lined $right>{row.prior}</Td>
          <Td>{row.code}</Td>
        </Tr>
      )))}
    </tbody>
  </Table>
)

const ResultGrid = () => (
  <Table $w={973}>
    <Cols widths={[12, ...resultCols.map((c) => c[1])]} />
    <thead>
      <tr>
        <Th />
        {resultCols.map(([name], i) => (
          <Th key={i} $closed>{name}</Th>
        ))}
      </tr>
    </thead>
  </Table>
)

const OptimizationDialog = () => (
  <Dialog role="dialog" aria-label="Optimization">
    <TitleBar $dialog>
      <LogoIcon />
      <Title as="h2">Optimization</Title>
      <WindowButton $narrow aria-label="Close dialog">
        <Svg size={12} box="0 0 12 12"><path d="M1 1l10 10M11 1L1 11" stroke="#444444" strokeWidth="1.500" /></Svg>
      </WindowButton>
    </TitleBar>
    <DialogRibbon />
    <DialogBody>
      <OptimizationOptions />
      <GridsPane>
        <MachineArea><MachineGrid /></MachineArea>
        <ProgressBox />
        <StockArea><StockGrid /></StockArea>
        <HScroll size="calc(100% - 11px)" />
      </GridsPane>
    </DialogBody>
    <ResultArea><ResultGrid /></ResultArea>
    <DialogStatus>
      <DialogStatusCell $pad={2}>Work Order: M0013101...</DialogStatusCell>
      <DialogStatusCell $pad={2} $line>Date:10/11/2021</DialogStatusCell>
      <DialogStatusCell $pad={6} $line>Tot. Area:50,00 mq</DialogStatusCell>
      <DialogStatusCell $pad={4} $line>Tot.Pieces:50</DialogStatusCell>
      <DialogStatusCell $pad={187}>Material Code:FL4</DialogStatusCell>
    </DialogStatus>
  </Dialog>
)

/* ---------- Taskbar ---------- */

const WindowsTaskbar = () => (
  <Taskbar>
    <TaskButton $start aria-label="Start">
      <Svg size={16} box="0 0 16 16">
        <path d="M0 2.200l7-1v6.300H0zM8 1l8-1v7.500H8zM0 8.500h7v6.300l-7-1zM8 8.500h8V16l-8-1z" fill="#ffffff" />
      </Svg>
    </TaskButton>
    <TaskButton aria-label="Chrome">
      <Svg size={22} box="0 0 22 22">
        <circle cx="11" cy="11" r="11" fill="#fbc116" />
        <path d="M1.500 5.500A11 11 0 0 0 10 22l5-8.500z" fill="#2da94f" />
        <path d="M11 5.500h9.500A11 11 0 0 0 1.500 5.500L6 13z" fill="#e33b2e" />
        <circle cx="11" cy="11" r="5.300" fill="#ffffff" />
        <circle cx="11" cy="11" r="4.200" fill="#3f82f0" />
      </Svg>
    </TaskButton>
    <TaskButton aria-label="Explorer">
      <Svg size={22} box="0 0 22 22">
        <path d="M1 3h8l2 2h10v14H1z" fill="#f0b429" />
        <path d="M1 7h20v12H1z" fill="#ffd666" />
        <path d="M4 12h14v8h-3v-4H7v4H4z" fill="#3c9be8" />
      </Svg>
    </TaskButton>
    <TaskButton aria-label="SQL Management Studio">
      <Svg size={22} box="0 0 22 22">
        <path d="M2 3q5-4 10 0v10q-5 4-10 0z" fill="#f7b733" />
        <ellipse cx="7" cy="3.500" rx="5" ry="2" fill="#ffe09a" />
        <path d="M16 1h5v5M1 16v5h5" stroke="#2f9048" strokeWidth="2" />
        <path d="M10 11l10 10M20 11L10 21" stroke="#2d7fd0" strokeWidth="2.500" />
      </Svg>
    </TaskButton>
    <TaskButton aria-label="Barcode">
      <Svg size={22} box="0 0 22 22">
        <path d="M0 0h22v22H0z" fill="#e8e8e8" />
        <path d="M2.500 1v20M5.500 1v20M11 1v20M16.500 1v20M19.500 1v20" stroke="#222222" strokeWidth="1.500" />
        <path d="M8 1v20M14 1v20" stroke="#222222" strokeWidth="2.500" />
        <path d="M0 11h22" stroke="#c0392b" />
      </Svg>
    </TaskButton>
    <TaskButton aria-label="Notepad++">
      <Svg size={22} box="0 0 22 22">
        <path d="M1 2h16v19H1z" fill="#f0f4e8" />
        <path d="M1 12h16v9H1z" fill="#6cc04a" />
        <path d="M3 2v3M7 2v3M11 2v3" stroke="#777777" />
        <path d="M4 9h9" stroke="#444444" strokeWidth="2" />
        <path d="M20 1l-8 14" stroke="#f0a030" strokeWidth="3" />
        <path d="M12.500 14l-1.500 4" stroke="#222222" strokeWidth="2" />
      </Svg>
    </TaskButton>
    <TaskButton aria-label="Paint">
      <Svg size={22} box="0 0 22 22">
        <ellipse cx="10" cy="13" rx="10" ry="8.500" fill="#b6d9f2" />
        <circle cx="5" cy="11" r="2" fill="#e04434" />
        <circle cx="10" cy="8.500" r="2" fill="#3fb56b" />
        <circle cx="5.500" cy="16.500" r="2" fill="#f5c02c" />
        <circle cx="11.500" cy="17.500" r="2" fill="#2d6fd0" />
        <path d="M20 0l-7 13" stroke="#c98a3c" strokeWidth="3" />
      </Svg>
    </TaskButton>
    <TaskButton aria-label="Optima">
      <Svg size={24} box="0 0 24 24">
        <path d="M0 1h24v22H0z" fill="#ffffff" />
        <path d="M0 1h24v6q-12-4-24 1z" fill="#0f9a3c" />
        <circle cx="13" cy="14" r="6.500" stroke="#2289d0" strokeWidth="2" strokeDasharray="4 3" />
        <circle cx="8" cy="18" r="2" fill="#f5a52c" />
        <circle cx="18" cy="19" r="2" fill="#2f9048" />
        <circle cx="8" cy="9" r="2" fill="#2f9048" />
      </Svg>
    </TaskButton>
    <TaskButton aria-label="Viewer">
      <Svg size={22} box="0 0 22 22">
        <path d="M0 2h22v18H0z" fill="#f4f4f4" stroke="#999999" />
        <path d="M2 6h9v10H2z" fill="#4a6f98" />
        <path d="M3 9h5v5H3z" fill="#3fb56b" />
        <path d="M13 7h7M13 10h7M13 13h7" stroke="#aaaaaa" />
      </Svg>
    </TaskButton>
    <TaskButton $active aria-label="OptyWay"><LogoIcon size={24} /></TaskButton>
    <Tray>
      <Chevron dir="up" size={14} color="#ffffff" width={1} />
      <Svg size={16} box="0 0 16 16">
        <path d="M3 4.500h7v7H3zM10 7l3-2v6l-3-2M4 1.500q3-1.500 6 0M4 14.500q3 1.500 6 0" stroke="#ffffff" />
      </Svg>
      <Svg size={16} box="0 0 16 16">
        <circle cx="8" cy="8" r="7" stroke="#ffffff" />
        <path d="M8 1q-7 7 0 14M8 1q7 7 0 14M1.500 5.500h13M1.500 10.500h8" stroke="#ffffff" />
        <circle cx="12.500" cy="12.500" r="3.500" fill="#1c1c1c" stroke="#ffffff" />
        <path d="M10.500 14.500l4-4" stroke="#ffffff" />
      </Svg>
      <Svg size={16} box="0 0 16 16">
        <path d="M1 6h2l4-3.500v11L3 10H1zM9 6q1.500 2 0 4M11 4.500q3 3.500 0 7M13 3q4.500 5 0 10" stroke="#ffffff" />
      </Svg>
      <TrayText $w={28} $big>ENG<br />IT</TrayText>
      <TrayText $w={64}>15:39<br />01/12/2021</TrayText>
      <Svg size={30} box="-7 -7 30 30">
        <path d="M0.500 0.500h15v12H11l-3 3-3-3H0.500z" stroke="#ffffff" />
      </Svg>
      <TrayEnd />
    </Tray>
  </Taskbar>
)

function App() {
  return (
    <Screen>
      <GlobalStyle />
      <TitleBar>
        <LogoIcon />
        <Title>OptyWay-Enterprise - [Workings]</Title>
        <WindowButtons>
          <WindowButton aria-label="Minimize">
            <Svg size={12} box="0 0 12 12"><path d="M1 6.500h10" stroke="#888888" /></Svg>
          </WindowButton>
          <WindowButton aria-label="Restore">
            <Svg size={12} box="0 0 12 12"><path d="M1.500 3.500h7v7h-7zM3.500 3V1.500h7v7H9" stroke="#888888" /></Svg>
          </WindowButton>
          <WindowButton aria-label="Close">
            <Svg size={12} box="0 0 12 12"><path d="M1 1l10 10M11 1L1 11" stroke="#888888" /></Svg>
          </WindowButton>
        </WindowButtons>
      </TitleBar>
      <MainRibbon />
      <Workspace>
        <MainSidebar />
        <Content>
          <BatchGrid />
          <LowerArea>
            <SheetGrid />
            <Preview><SheetDrawing /></Preview>
          </LowerArea>
        </Content>
      </Workspace>
      <StatusBar>
        <StatusCell $w={298} $first>DataBase: localhost\SQL2019(OPTIMA_DEMO_UNICODE)</StatusCell>
        <StatusCell $w={80}>S.N. 1000</StatusCell>
        <StatusCell $w={80}>M.U. mm</StatusCell>
        <StatusCell $w={120}>Language: English</StatusCell>
        <StatusCell $w={200}>Customer: OPTIMA SRL</StatusCell>
        <StatusCell $w={120}>User: sa</StatusCell>
        <StatusCell $w={120} $last>v. 6.9.1.0</StatusCell>
      </StatusBar>
      <WindowsTaskbar />
      <OptimizationDialog />
    </Screen>
  )
}

export default App
